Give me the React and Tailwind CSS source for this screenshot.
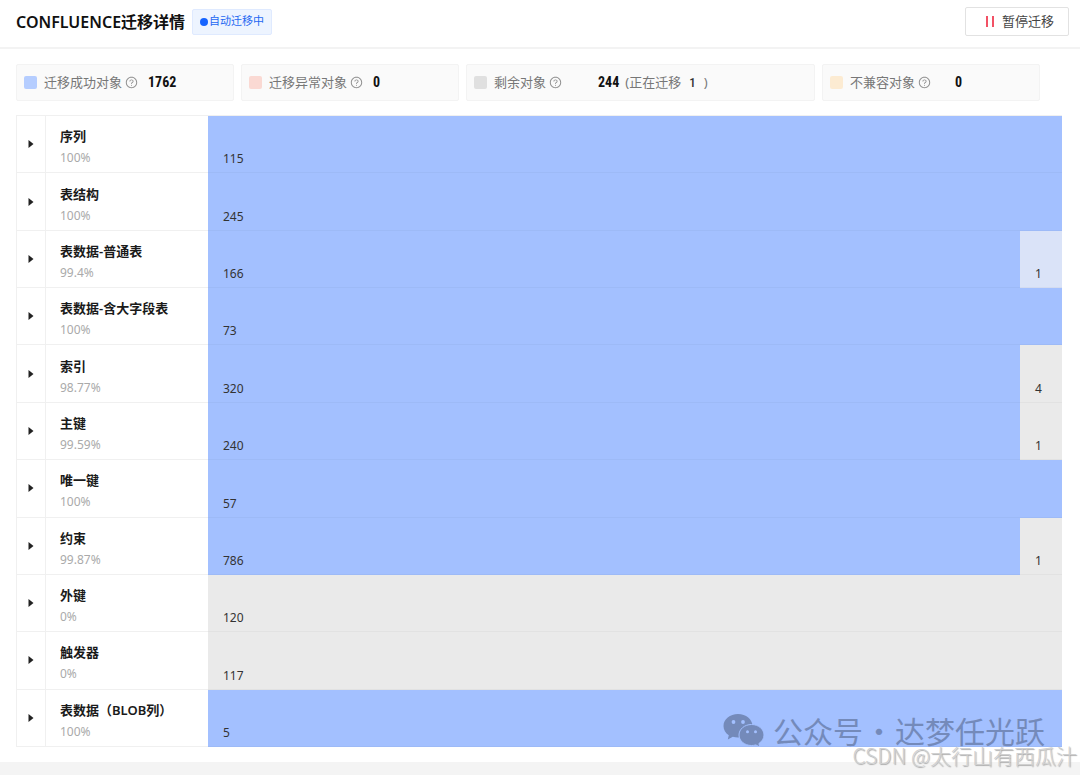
import React, { useState } from "react";
import { AiOutlineQuestionCircle } from "react-icons/ai";

const stats = [
  { label: "迁移成功对象", value: 1762, color: "bg-[#b5cdff]", gap: "ml-[10px]" },
  { label: "迁移异常对象", value: 0, color: "bg-[#fad9d3]", gap: "ml-[10px]" },
  { label: "剩余对象", value: 244, color: "bg-[#e0e0e0]", gap: "ml-9", running: 1 },
  { label: "不兼容对象", value: 0, color: "bg-[#fcebd2]", gap: "ml-6" },
];

const rows = [
  { name: "序列", percent: "100%", done: 115 },
  { name: "表结构", percent: "100%", done: 245 },
  { name: "表数据-普通表", percent: "99.4%", done: 166, running: 1 },
  { name: "表数据-含大字段表", percent: "100%", done: 73 },
  { name: "索引", percent: "98.77%", done: 320, remaining: 4 },
  { name: "主键", percent: "99.59%", done: 240, remaining: 1 },
  { name: "唯一键", percent: "100%", done: 57 },
  { name: "约束", percent: "99.87%", done: 786, remaining: 1 },
  { name: "外键", percent: "0%", remaining: 120 },
  { name: "触发器", percent: "0%", remaining: 117 },
  { name: "表数据（BLOB列）", percent: "100%", done: 5 },
];

function StatCard({ stat }) {
  return (
    <div className="flex h-[37px] items-center whitespace-nowrap rounded-xs border border-[#f3f3f3] bg-[#fafafa] pl-[7px] text-[13px] text-[#777]">
      <span className={`mr-[7px] size-[13px] rounded-xs ${stat.color}`} />
      <span>{stat.label}</span>
      <AiOutlineQuestionCircle className="ml-[3px] size-[13px] text-[#8c8c8c]" />
      <span
        className={`font-['Roboto_Condensed','Roboto',sans-serif] text-[14px] font-bold text-[#111] ${stat.gap}`}
      >
        {stat.value}
      </span>
      {stat.running && (
        <span className="ml-[6px] flex">
          (正在迁移
          <b className="mx-2 font-['Roboto_Condensed','Roboto',sans-serif] font-medium text-[#333]">
            {stat.running}
          </b>
          )
        </span>
      )}
    </div>
  );
}

function Segment({ value, className }) {
  return (
    <div
      className={`flex items-end border-b border-black/3 pb-1 text-xs leading-[18px] text-[#333] ${className}`}
    >
      {value}
    </div>
  );
}

function Row({ row, open, onToggle }) {
  return (
    <tr>
      <td className="h-[57px] border-x border-b border-[#f0f0f0] p-0 text-center">
        <button
          type="button"
          aria-label={row.name}
          aria-expanded={open}
          onClick={onToggle}
          className="block w-full py-2"
        >
          <svg
            viewBox="0 0 6 8"
            className={open ? "mx-auto h-2 w-[6px] rotate-90" : "mx-auto h-2 w-[6px]"}
          >
            <path d="M0.5 0L5.5 4L0.5 8Z" fill="#222" />
          </svg>
        </button>
      </td>
      <td className="h-[57px] border-b border-[#f0f0f0] p-0 pt-[6px] pl-[14px]">
        <div className="text-[13px] font-semibold leading-[21px] text-[#1a1a1a]">{row.name}</div>
        <div className="text-xs leading-[21px] text-[#aaa]">{row.percent}</div>
      </td>
      <td className="h-[57px] p-0">
        <div className="flex h-full">
          {row.done && (
            <Segment value={row.done} className="flex-1 bg-[#a3c0ff] pl-[15px]" />
          )}
          {row.running && (
            <Segment value={row.running} className="w-[42px] bg-[#dae3f8] pl-[15px]" />
          )}
          {row.remaining && (
            <Segment
              value={row.remaining}
              className={
                row.done ? "w-[42px] bg-[#eaeaea] pl-[15px]" : "flex-1 bg-[#eaeaea] pl-[15px]"
              }
            />
          )}
        </div>
      </td>
    </tr>
  );
}

function Watermark() {
  return (
    <>
      <div className="pointer-events-none absolute right-[35px] bottom-[28px] flex items-center font-['Noto_Sans_CJK_SC',sans-serif] text-[30px] leading-[34px] text-[#748aba]">
        <svg viewBox="0 0 41 34" className="mr-[9px] h-[34px] w-[41px]">
          <path
            d="M15 1C7 1 .5 6.300 .5 13c0 3.800 2 7 5.300 9.300L4.800 26.500l5-2.700c1.600.5 3.400.7 5.200.7 8 0 14.500-5 14.500-11.500S23 1 15 1Z"
            fill="#748aba"
          />
          <path
            d="M28.500 11.500c-7 0-12.500 4.700-12.500 10.500s5.500 10.500 12.500 10.500c1.500 0 3-.2 4.300-.6l4 2.100-.9-3.500C39 28.600 41 25.500 41 22c0-5.800-5.500-10.500-12.500-10.500Z"
            fill="#748aba"
            stroke="#a3c0ff"
            strokeWidth="1"
          />
          <circle cx="10.500" cy="9" r="1.900" fill="#a3c0ff" />
          <circle cx="20" cy="9" r="1.900" fill="#a3c0ff" />
          <circle cx="24.500" cy="18.800" r="1.500" fill="#a3c0ff" />
          <circle cx="32.500" cy="18.800" r="1.500" fill="#a3c0ff" />
        </svg>
        <span>公众号</span>
        <span className="w-8 text-center">·</span>
        <span>达梦任光跃</span>
      </div>
      <div className="pointer-events-none absolute right-[3px] bottom-[9px] font-['Noto_Sans_CJK_SC',sans-serif] text-[21px] leading-[22px] font-light text-[#d0d0d0] [text-shadow:1px_1px_1px_#aaa]">
        CSDN @太行山有西瓜汁
      </div>
    </>
  );
}

function App() {
  const [openRow, setOpenRow] = useState(null);
  const [paused, setPaused] = useState(false);

  return (
    <div className="relative min-h-screen bg-[#f4f4f4] font-['Noto_Sans','Noto_Sans_CJK_SC',sans-serif]">
      <div className="bg-white pb-[15px]">
        <header className="flex items-center border-b-2 border-[#f3f3f3] pt-[7px] pr-[11px] pb-[11px] pl-4">
          <h1 className="text-base font-semibold leading-6 text-[#111]">CONFLUENCE迁移详情</h1>
          <span className="ml-[7px] flex h-[26px] items-center rounded-xs border border-[#dfeaff] bg-[#edf4ff] px-[7px] text-[11px] text-[#2468f2]">
            <span className="mr-px size-2 rounded-full bg-[#1664ff]" />
            自动迁移中
          </span>
          <button
            type="button"
            onClick={() => setPaused(!paused)}
            className="ml-auto flex h-[29px] w-[104px] items-center justify-center rounded-xs border border-[#e2e2e2] bg-white pl-[6px] text-[13px] text-[#444]"
          >
            <svg viewBox="0 0 8 11" className="mr-2 h-[11px] w-2">
              <path d="M1 0V11M7 0V11" stroke="#f0344b" strokeWidth="1.700" />
            </svg>
            暂停迁移
          </button>
        </header>

        <section className="grid grid-cols-[218fr_218fr_349fr_218fr] gap-[7px] pt-[15px] pr-10 pl-4">
          {stats.map((stat) => (
            <StatCard key={stat.label} stat={stat} />
          ))}
        </section>

        <div className="pt-[14px] pr-[18px] pl-4">
          <table className="h-[632px] w-full table-fixed border-separate border-spacing-0 border-t border-[#f0f0f0]">
            <colgroup>
              <col className="w-[30px]" />
              <col className="w-[162px]" />
              <col />
            </colgroup>
            <tbody>
              {rows.map((row, index) => (
                <Row
                  key={row.name}
                  row={row}
                  open={openRow === index}
                  onToggle={() => setOpenRow(openRow === index ? null : index)}
                />
              ))}
            </tbody>
          </table>
        </div>
      </div>
      <Watermark />
    </div>
  );
}

export default App;
